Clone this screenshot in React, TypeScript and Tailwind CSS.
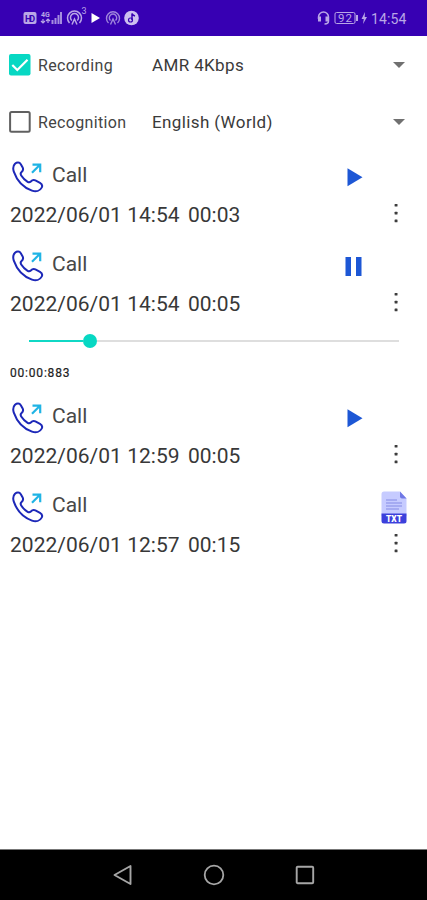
import type { ReactNode } from 'react';

function StatusBar() {
  return (
    <header className="flex h-[35.500px] shrink-0 items-center justify-between bg-[#3700b3] pl-[23px] pr-[20px] pt-[1px] text-[#b9a6e6]">
      <svg width="118" height="24" viewBox="0 0 118 24" fill="none" stroke="currentColor">
        <rect x="0.5" y="6" width="13" height="12" rx="2" fill="currentColor" stroke="none" />
        <text x="2" y="15.5" fontSize="9" fontWeight="700" fontFamily="Roboto, sans-serif" fill="#3700b3" stroke="none" textLength="10">HD</text>
        <text x="18" y="11" fontSize="7" fontWeight="700" fontFamily="Roboto, sans-serif" fill="currentColor" stroke="none">4G</text>
        <path d="M20 13v4M18 15l2 2 2-2M25 17v-4M23 15l2-2 2 2" strokeWidth="1.2" />
        <path d="M29.500 18v-4M32.500 18v-6M35.500 18V9M38 18V6" strokeWidth="2" opacity=".85" />
        <path d="M46.500 17a7 7 0 1 1 10 0M48.800 14.500a4 4 0 1 1 5.400 0M49 18.500l2.500-5.500 2.500 5.500" strokeWidth="1.500" />
        <path d="M85.500 17a6.500 6.500 0 1 1 9 0M87.500 14.500a3.700 3.700 0 1 1 5 0M87.500 18.500l2.500-5.500 2.500 5.500" strokeWidth="1.400" opacity=".8" />
        <text x="58.500" y="8" fontSize="9" fontFamily="Roboto, sans-serif" fill="currentColor" stroke="none">3</text>
        <path d="M68.500 7v10l8.500-5z" fill="#fff" stroke="none" />
        <circle cx="108.500" cy="12" r="7.300" fill="#cdbff0" stroke="none" />
        <path d="M109 14V7.500c.5 2 1.500 2 3 2.500" stroke="#3700b3" strokeWidth="1.500" />
        <circle cx="107.500" cy="14" r="2" stroke="#3700b3" strokeWidth="1.200" />
      </svg>
      <div className="flex items-center">
        <svg width="53" height="24" viewBox="0 0 53 24" fill="none" stroke="currentColor">
          <path d="M2.500 13V11a5 5 0 0 1 10 0v4q0 3-4 3" strokeWidth="1.500" />
          <path d="M3.500 10.500v5M11 10.500v5" strokeWidth="3" />
          <rect x="19" y="6.500" width="20" height="11" rx="1.500" />
          <path d="M41 9v6" strokeWidth="2" />
          <text x="22" y="16" fontSize="11.500" fontFamily="Roboto, sans-serif" fill="currentColor" stroke="none" textLength="14">92</text>
          <path d="M49 6L45.500 13h2.300L47 18l4-7h-2.300z" fill="currentColor" stroke="none" />
        </svg>
        <span className="ml-[2px] mt-[1px] w-[36px] text-[14px] leading-none tracking-[0.1px]">14:54</span>
      </div>
    </header>
  );
}

function SettingRow({ label, value, checked = false }: { label: string; value: string; checked?: boolean }) {
  return (
    <div className="flex h-[57px] items-center pl-[9px] pr-[22px]">
      <svg width="22" height="22" viewBox="0 0 22 22" fill="none" className="shrink-0">
        {checked ? (
          <>
            <rect width="21.500" height="21.500" rx="2" fill="#07d8c3" />
            <path d="M3.300 11l5 5L18.500 5.700" stroke="#fff" strokeWidth="2.200" />
          </>
        ) : (
          <rect x="1.100" y="1.100" width="19.600" height="19.600" rx="1.500" stroke="#606060" strokeWidth="2" />
        )}
      </svg>
      <span className="ml-[7px] mt-[1px] w-[114px] whitespace-nowrap text-[16px] tracking-[0.35px] text-[#444]">{label}</span>
      <span className="mt-[1px] flex-1 whitespace-nowrap text-[17px] tracking-[0.38px] text-[#3a3a3a]">{value}</span>
      <svg width="12" height="6" viewBox="0 0 12 6" className="shrink-0">
        <path d="M0 0h12L6 6z" fill="#707070" />
      </svg>
    </div>
  );
}

function CallIcon() {
  return (
    <svg width="33" height="33" viewBox="0 0 33 33" fill="none" className="shrink-0">
      <path
        d="M3 2.800C5 1 7.500 1.200 8.800 3.200L10.800 6.800C11.600 8.600 10.800 10 9.400 11.200C8.300 12.300 8.400 13.200 9.200 14.500C10.800 17 13 19.200 15.600 20.800C16.900 21.600 17.800 21.500 18.800 20.500C20.200 19 21.600 18.600 23.400 19.400L28 21.800C30.200 23.100 30.600 24.600 29.800 26.400C28 30 24 31 20 29.600C11.300 26.500 4.800 19.300 1.800 10.600C.8 7.500 1 4.800 3 2.800z"
        stroke="#1d28b8"
        strokeWidth="2"
        strokeLinejoin="round"
      />
      <path d="M20 11.800l8-8M20.500 3.600h7.700v7.700" stroke="#20b4e5" strokeWidth="2.200" />
    </svg>
  );
}

function PlayIcon() {
  return (
    <svg width="16" height="19" viewBox="0 0 16 19" className="mr-[64.500px]">
      <path d="M0.500 0.300v18l15-9z" fill="#1d57d5" />
    </svg>
  );
}

function PauseIcon() {
  return (
    <svg width="17" height="19" viewBox="0 0 17 19" className="mr-[65.500px] -mt-[1px]">
      <path d="M0.500 0h5.500v19H0.500zM11 0h5.500v19H11z" fill="#1d57d5" />
    </svg>
  );
}

function TextFileIcon() {
  return (
    <svg width="26" height="33" viewBox="0 0 26 33" className="mr-[20px]">
      <path d="M3 .5h16l6.500 7V25H.5V3Q.5.500 3 .5z" fill="#c6cbff" />
      <path d="M19 .5l6.500 7H21q-2 0-2-2z" fill="#7078e5" />
      <path d="M5 9h11M5 12h16M5 15h16M5 18h13" stroke="#9aa1ee" strokeWidth="1.500" />
      <path d="M.5 22.500h25v7.500q0 2.500-2.500 2.500H3Q.5 32.500.5 30z" fill="#3c40dc" />
      <text x="5" y="30.500" fontSize="8.500" fontWeight="900" fontFamily="Roboto, sans-serif" fill="#fff" textLength="16" lengthAdjust="spacingAndGlyphs">TXT</text>
    </svg>
  );
}

function CallRecord({ date, duration, action }: { date: string; duration: string; action: ReactNode }) {
  return (
    <article className="h-[89.500px] shrink-0">
      <div className="flex h-[44px] items-center justify-between pl-[12px]">
        <div className="flex items-center">
          <CallIcon />
          <h2 className="-mt-[5px] ml-[7px] text-[21px] leading-[26px] text-[#484848]">Call</h2>
        </div>
        {action}
      </div>
      <div className="-mt-[1px] flex h-[33px] items-center pl-[10px] pr-[29px] text-[21px] leading-[26px] text-[#383838]">
        <span className="w-[178px] whitespace-nowrap tracking-[0.02px]">{date}</span>
        <span className="flex-1">{duration}</span>
        <svg width="4" height="20" viewBox="0 0 4 20" className="-mt-[4px]" fill="#3d3d3d">
          <rect x=".6" y="1" width="2.900" height="2.600" rx=".5" />
          <rect x=".6" y="8.800" width="2.900" height="2.600" rx=".5" />
          <rect x=".6" y="16.600" width="2.900" height="2.600" rx=".5" />
        </svg>
      </div>
    </article>
  );
}

function PlaybackProgress() {
  return (
    <section className="h-[62px] shrink-0">
      <div className="ml-[29px] mr-[28px] flex h-[14px] items-center">
        <div className="h-[2.500px] w-[53.500px] bg-[#10d8c5]" />
        <div className="size-[14px] rounded-full bg-[#07d8c3]" />
        <div className="h-[2.500px] flex-1 bg-[#dedede]" />
      </div>
      <div className="ml-[10px] mt-[17px] text-[12px] leading-[16px] tracking-[0.8px] text-[#222] [-webkit-text-stroke:0.2px_#222]">00:00:883</div>
    </section>
  );
}

function NavigationBar() {
  return (
    <nav className="flex h-[51px] shrink-0 items-center justify-between border-t border-[#777] bg-black pl-[113px] pr-[112px]">
      <svg width="20" height="22" viewBox="0 0 20 22" fill="none" stroke="#a6a6a6" strokeWidth="1.900">
        <path d="M1.500 11L17.500 2v18z" strokeLinejoin="round" />
      </svg>
      <svg width="22" height="22" viewBox="0 0 22 22" fill="none" stroke="#a6a6a6" strokeWidth="1.800">
        <circle cx="11" cy="11" r="9.300" />
      </svg>
      <svg width="20" height="20" viewBox="0 0 20 20" fill="none" stroke="#a6a6a6" strokeWidth="1.900">
        <rect x="1.700" y="1.700" width="16.500" height="16.500" rx="1" />
      </svg>
    </nav>
  );
}

export default function App() {
  return (
    <div className="flex h-[900px] w-[427px] flex-col overflow-hidden bg-white font-[Roboto,sans-serif]">
      <StatusBar />
      <main className="flex min-h-0 flex-1 flex-col">
        <section className="h-[119.500px] shrink-0 pt-[1px]">
          <SettingRow label="Recording" value="AMR 4Kbps" checked />
          <SettingRow label="Recognition" value="English (World)" />
        </section>
        <CallRecord date="2022/06/01 14:54" duration="00:03" action={<PlayIcon />} />
        <CallRecord date="2022/06/01 14:54" duration="00:05" action={<PauseIcon />} />
        <PlaybackProgress />
        <CallRecord date="2022/06/01 12:59" duration="00:05" action={<PlayIcon />} />
        <CallRecord date="2022/06/01 12:57" duration="00:15" action={<TextFileIcon />} />
      </main>
      <NavigationBar />
    </div>
  );
}
